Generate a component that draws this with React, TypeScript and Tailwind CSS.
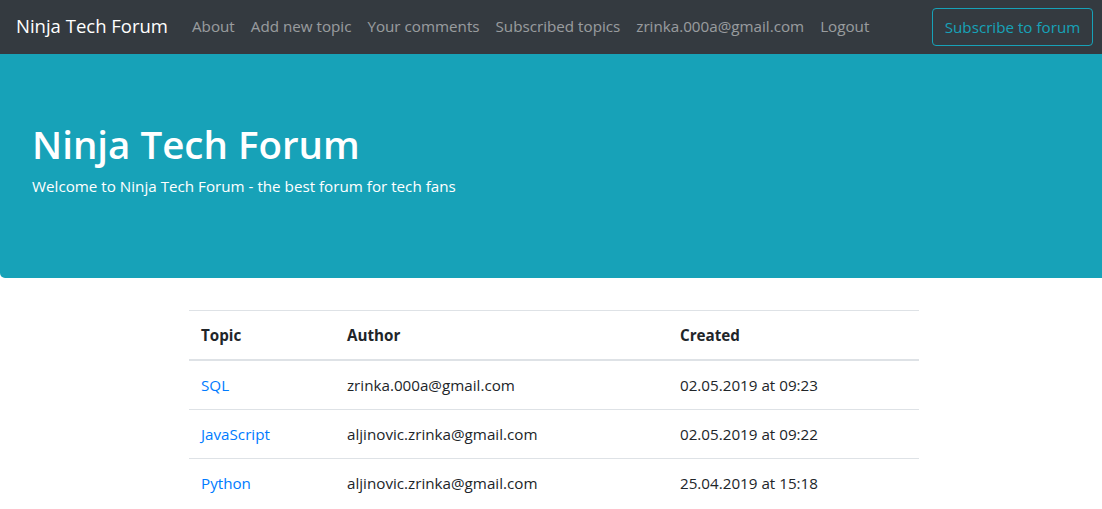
const navLinks = ["About", "Add new topic", "Your comments", "Subscribed topics", "zrinka.000a@gmail.com", "Logout"];

const topics = [
  { name: "SQL", author: "zrinka.000a@gmail.com", created: "02.05.2019 at 09:23" },
  { name: "JavaScript", author: "aljinovic.zrinka@gmail.com", created: "02.05.2019 at 09:22" },
  { name: "Python", author: "aljinovic.zrinka@gmail.com", created: "25.04.2019 at 15:18" },
];

export default function App() {
  return (
    <div className="min-h-screen bg-white text-[#212529] font-['Open_Sans',sans-serif]">
      {/* Navbar */}
      <nav className="h-[54px] bg-[#343a40] flex items-center px-4 whitespace-nowrap">
        <a href="#" className="text-white text-[18.5px] mr-4 leading-[30px] -mt-[2px]">Ninja Tech Forum</a>
        <ul className="flex items-center -mt-[2px]">
          {navLinks.map((l) => (
            <li key={l}>
              <a href="#" className="block px-2 py-2 text-[15.2px] leading-6 text-white/50">{l}</a>
            </li>
          ))}
        </ul>
        <button className="ml-auto h-[38px] w-[161px] mr-[-7px] rounded-[4px] border border-[#17a2b8] text-[#17a2b8] text-[15.2px]">
          Subscribe to forum
        </button>
      </nav>

      {/* Jumbotron */}
      <div className="bg-[#17a2b8] h-[224px] px-8 pt-[66px] rounded-bl-[5px] text-white">
        <h1 className="text-[38.5px] leading-[48px] font-semibold mb-[6px]">Ninja Tech Forum</h1>
        <p className="text-[15.2px] leading-6">Welcome to Ninja Tech Forum - the best forum for tech fans</p>
      </div>

      {/* Table */}
      <div className="flex justify-center pt-8 pl-[6px]">
        <table className="w-[730px] text-[15.2px] leading-6 border-collapse">
          <thead>
            <tr className="border-t border-[#dee2e6] border-b-2">
              <th className="w-[146px] p-3 text-left font-bold">Topic</th>
              <th className="w-[333px] p-3 text-left font-bold">Author</th>
              <th className="p-3 text-left font-bold">Created</th>
            </tr>
          </thead>
          <tbody>
            {topics.map((t) => (
              <tr key={t.name} className="border-t border-[#dee2e6]">
                <td className="p-3">
                  <a href="#" className="text-[#007bff]">{t.name}</a>
                </td>
                <td className="p-3">{t.author}</td>
                <td className="p-3">{t.created}</td>
              </tr>
            ))}
          </tbody>
        </table>
      </div>
    </div>
  );
}
